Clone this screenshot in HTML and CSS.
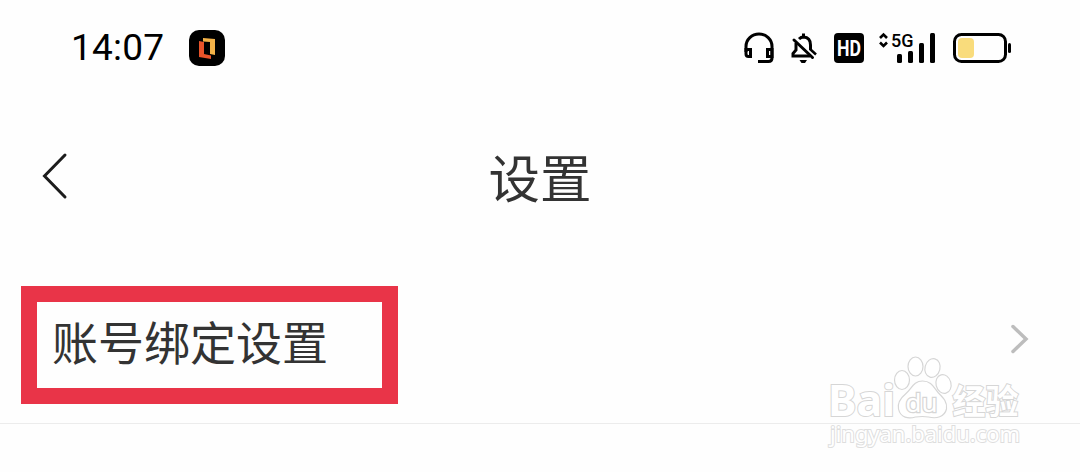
FILE: index.html
```html
<!DOCTYPE html>
<html lang="zh-CN">
<head>
  <meta charset="UTF-8">
  <meta name="viewport" content="width=device-width, initial-scale=1.0">
  <title>设置</title>
  <link rel="stylesheet" href="styles.css">
</head>
<body>
  <div class="status-bar">
    <span class="time">14:07</span>
    <svg class="app-icon" width="36" height="36" viewBox="0 0 36 36">
      <rect width="36" height="36" rx="10" fill="#000"/>
      <path d="M10 11L15 12V24L22 25.500V29L10 27Z" fill="#e9532a"/>
      <path d="M14 8L26 9V25L21 24V12L14 11.500Z" fill="#f3b248"/>
    </svg>

    <div class="status-icons">
      <svg width="30" height="32" viewBox="0 0 30 32" fill="none" stroke="#000" stroke-width="3">
        <path d="M2 20V14.500A13 12.500 0 0 1 28 14.500V26Q28 29.500 24.500 29.500H14"/>
        <path d="M2 17.500H6.500V24.500H4.500Q2 24.500 2 22Z"/>
        <path d="M28 17.500H23.500V24.500H28Z"/>
      </svg>
      <svg class="bell" width="28" height="32" viewBox="0 0 28 32" fill="none" stroke="#000" stroke-width="3">
        <path d="M9 7Q11 5 13.500 5Q20.500 5.500 20.500 13V18"/>
        <path d="M6 11V18L3 21.500V24H20"/>
        <path d="M13.500 1.500V5"/>
        <path d="M4 8L22.500 25.500" stroke-linecap="round"/>
        <path d="M20 17L26 22.500" stroke-width="2.500"/>
        <path d="M9.500 28H17L15 31H11.500Z" fill="#000" stroke="none"/>
      </svg>
      <svg class="hd" width="30" height="30" viewBox="0 0 30 30">
        <rect width="30" height="30" rx="4" fill="#000"/>
        <text x="3" y="23" textLength="24" lengthAdjust="spacingAndGlyphs">HD</text>
      </svg>
      <svg class="signal" width="58" height="32" viewBox="0 0 58 32">
        <path d="M1 6L4.500 2.500L8 6M1 10.500L4.500 14L8 10.500" fill="none" stroke="#000" stroke-width="2.600"/>
        <text x="12" y="15" textLength="22.500" lengthAdjust="spacingAndGlyphs">5G</text>
        <rect x="18" y="22" width="5" height="9" rx="1.500"/>
        <rect x="29" y="19" width="5" height="12" rx="1.500"/>
        <rect x="40" y="11" width="5" height="20" rx="1.500"/>
        <rect x="51" y="1" width="5" height="30" rx="1.500"/>
      </svg>
      <svg class="battery" width="58" height="30" viewBox="0 0 58 30">
        <rect x="1.500" y="1.500" width="51" height="27" rx="7" fill="none" stroke="#000" stroke-width="3"/>
        <rect x="5" y="5" width="16" height="20" rx="4" fill="#f9dc7c"/>
        <rect x="55" y="10" width="3" height="10" rx="1.500"/>
      </svg>
    </div>
  </div>

  <div class="nav-bar">
    <svg class="back" width="28" height="48" viewBox="0 0 28 48">
      <path d="M25 3L4.500 24L25 45"/>
    </svg>
    <h1>设置</h1>
  </div>

  <div class="row">
    <span class="row-label">账号绑定设置</span>
    <svg class="arrow" width="20" height="30" viewBox="0 0 20 30">
      <path d="M3 2.500L16 15L3 27.500"/>
    </svg>
  </div>

  <svg class="watermark" width="210" height="100" viewBox="0 0 210 100">
    <text class="wm-brand" x="4" y="65" textLength="67" lengthAdjust="spacingAndGlyphs">Bai</text>
    <ellipse cx="78" cy="29" rx="7.500" ry="9.500"/>
    <ellipse cx="91.500" cy="15.500" rx="7.500" ry="9.500"/>
    <ellipse cx="108.500" cy="17" rx="7.500" ry="9.500" transform="rotate(15 108.500 17)"/>
    <ellipse cx="119.500" cy="33" rx="7.500" ry="9.500" transform="rotate(-15 119.500 33)"/>
    <path d="M98.500 30C89.500 30 87.500 38 81.500 43C75.500 48 73.500 53 74.500 58C76.500 67 84.500 68 91.500 66Q98.500 65 104.500 66C112.500 68 120.500 66 122.500 58C123.500 51 119.500 47 114.500 42C109.500 36 107.500 30 98.500 30Z"/>
    <text class="wm-du" x="81.500" y="61" textLength="32" lengthAdjust="spacingAndGlyphs">du</text>
    <text class="wm-cn" x="128.500" y="63" textLength="66" lengthAdjust="spacingAndGlyphs">经验</text>
    <text class="wm-url" x="6" y="91" textLength="190" lengthAdjust="spacingAndGlyphs">jingyan.baidu.com</text>
  </svg>
</body>
</html>
```
FILE: styles.css
```css
* {
  box-sizing: border-box;
}
body {
  margin: 0;
  position: relative;
  height: 472px;
  overflow: hidden;
  background: #fefefe;
  color: #333;
  font-family: "Noto Sans CJK SC", sans-serif;
}
svg {
  display: block;
  flex: none;
  overflow: visible;
}

/* status bar */
.status-bar {
  display: flex;
  align-items: center;
  height: 96px;
  padding: 0 69px 0 71px;
}
.time {
  width: 118px;
  font-family: "Roboto", sans-serif;
  font-size: 37px;
  line-height: 96px;
  letter-spacing: 0.2px;
  color: #000;
}
.status-icons {
  display: flex;
  align-items: center;
  margin-left: auto;
}
.bell {
  margin-left: 16px;
}
.hd {
  margin-left: 16px;
}
.hd text {
  font: bold 22px "Roboto", sans-serif;
  fill: #fff;
}
.signal {
  margin-left: 15px;
}
.signal text {
  font: 500 19px "Roboto", sans-serif;
}
.battery {
  margin-left: 16px;
}

/* title */
.nav-bar {
  display: grid;
  grid-template-columns: 40px 1fr 40px;
  align-items: center;
  height: 160px;
  padding: 0 40px;
}
.back path {
  fill: none;
  stroke: #1c1c1c;
  stroke-width: 3;
  stroke-linecap: round;
}
h1 {
  margin: 0 0 1px;
  font-size: 51.5px;
  font-weight: 400;
  line-height: 60px;
  text-align: center;
}

/* list row */
.row {
  display: flex;
  align-items: center;
  justify-content: space-between;
  height: 168px;
  padding: 10px 50px 0 21px;
  border-bottom: 1px solid #ececec;
}
.row-label {
  width: 377px;
  height: 118px;
  padding-left: 15px;
  border: 16px solid #e93448;
  font-size: 46px;
  line-height: 77px;
}
.arrow {
  margin-bottom: 12px;
}
.arrow path {
  fill: none;
  stroke: #bdbdbd;
  stroke-width: 3.5;
  stroke-linecap: round;
}

/* watermark lies over the row border */
.watermark {
  position: absolute;
  left: 824px;
  top: 351px;
  fill: #fff;
  stroke: #d6d6d6;
  stroke-width: 1.2;
}
.watermark text {
  paint-order: stroke;
  stroke-width: 2;
}
.wm-brand {
  font: bold 43px "Noto Sans", sans-serif;
}
.watermark .wm-du {
  font: 26px "Noto Sans", sans-serif;
  stroke-width: 2.5;
}
.wm-cn {
  font: bold 34px "Noto Sans CJK SC", sans-serif;
}
.watermark .wm-url {
  font: 22px "Noto Sans", sans-serif;
  stroke: #dedede;
}
```
